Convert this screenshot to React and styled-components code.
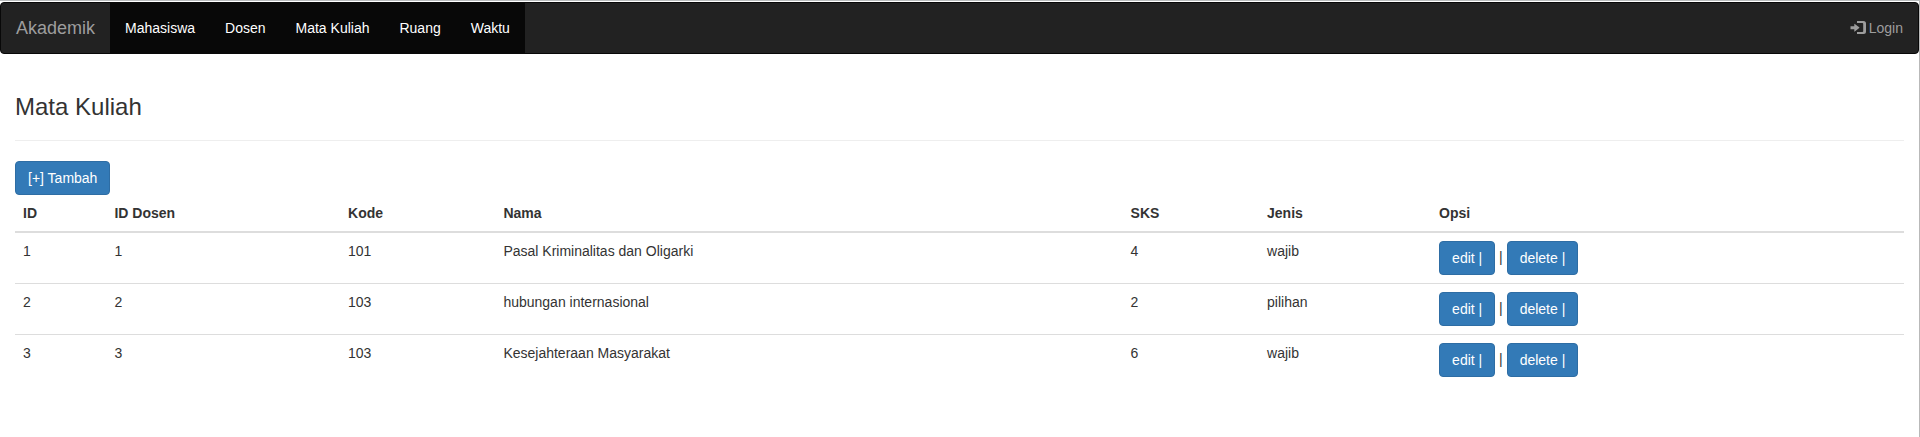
import React from "react";
import styled, { createGlobalStyle } from "styled-components";

const GlobalStyle = createGlobalStyle`
  *, *::before, *::after { box-sizing: border-box; }
  html { background: #fff; }
  body {
    margin: 0;
    font-family: "Helvetica Neue", Helvetica, Arial, "Liberation Sans", sans-serif;
    font-size: 14px;
    line-height: 20px;
    color: #333;
  }
`;

const Page = styled.div`
  min-height: 100vh;
  border-top: 1px solid #b9bcbd;
  border-right: 1px solid #b9b9b9;
  padding-top: 1px;
`;

const Navbar = styled.nav`
  display: flex;
  align-items: stretch;
  min-height: 52px;
  margin-bottom: 20px;
  background: #222;
  border: 1px solid #080808;
  border-radius: 4px;
`;

const Brand = styled.a`
  padding: 15px;
  font-size: 18px;
  color: #9d9d9d;
  text-decoration: none;
`;

const NavList = styled.ul`
  display: flex;
  margin: 0;
  margin-left: ${(p) => (p.$end ? "auto" : "0")};
  padding: 0;
  list-style: none;
`;

const NavLink = styled.a`
  display: block;
  padding: 15px;
  color: ${(p) => (p.$active ? "#fff" : "#9d9d9d")};
  background: ${(p) => (p.$active ? "#080808" : "transparent")};
  text-decoration: none;
`;

const LoginLink = styled(NavLink)`
  display: flex;
  align-items: center;
  gap: 3px;
`;

const Container = styled.main`
  display: flow-root;
  padding: 0 15px;
`;

const Title = styled.h3`
  margin: 20px 0;
  font-size: 24px;
  font-weight: 500;
  line-height: 26px;
`;

const Divider = styled.hr`
  margin: 20px 0;
  border: 0;
  border-top: 1px solid #eee;
`;

const Button = styled.button`
  display: inline-block;
  padding: 6px 12px;
  font: inherit;
  color: #fff;
  vertical-align: middle;
  white-space: nowrap;
  background: #337ab7;
  border: 1px solid #2e6da4;
  border-radius: 4px;
  cursor: pointer;
`;

const Toolbar = styled.div`
  display: flex;
`;

const Table = styled.table`
  width: 100%;
  margin-bottom: 20px;
  border-collapse: collapse;
  border-spacing: 0;
`;

const HeadCell = styled.th`
  padding: 8px;
  text-align: left;
  vertical-align: bottom;
  border-bottom: 2px solid #ddd;
`;

const Cell = styled.td`
  padding: 8px;
  vertical-align: top;
  border-top: 1px solid #ddd;
`;

function LoginIcon() {
  return (
    <svg width="16" height="14" viewBox="0 0 16 14" fill="#9d9d9d" aria-hidden="true">
      <path d="M0.500 5.300h3.800V3.200q0-.6.500-.2l4.400 3.300q.4.400 0 .8L4.800 10.500q-.5.400-.5-.2V8.200H.500z" />
      <path d="M7 0h6.500A2.500 2.500 0 0 1 16 2.500v8a2.500 2.500 0 0 1-2.500 2.500H7v-2h5.400a.8.8 0 0 0 .8-.8V2.800a.8.8 0 0 0-.8-.8H7z" />
    </svg>
  );
}

const menu = ["Mahasiswa", "Dosen", "Mata Kuliah", "Ruang", "Waktu"];
const columns = ["ID", "ID Dosen", "Kode", "Nama", "SKS", "Jenis", "Opsi"];
const courses = [
  [1, 1, 101, "Pasal Kriminalitas dan Oligarki", 4, "wajib"],
  [2, 2, 103, "hubungan internasional", 2, "pilihan"],
  [3, 3, 103, "Kesejahteraan Masyarakat", 6, "wajib"],
];

export default function App() {
  return (
    <Page>
      <GlobalStyle />
      <Navbar>
        <Brand href="#">Akademik</Brand>
        <NavList>
          {menu.map((name) => (
            <li key={name}>
              <NavLink href="#" $active>{name}</NavLink>
            </li>
          ))}
        </NavList>
        <NavList $end>
          <li>
            <LoginLink href="#"><LoginIcon />Login</LoginLink>
          </li>
        </NavList>
      </Navbar>
      <Container>
        <Title>Mata Kuliah</Title>
        <Divider />
        <Toolbar>
          <Button type="button">[+] Tambah</Button>
        </Toolbar>
        <Table>
          <thead>
            <tr>
              {columns.map((name) => (
                <HeadCell key={name} scope="col">{name}</HeadCell>
              ))}
            </tr>
          </thead>
          <tbody>
            {courses.map((course) => (
              <tr key={course[0]}>
                {course.map((value, i) => (
                  <Cell key={columns[i]}>{value}</Cell>
                ))}
                <Cell>
                  <Button type="button">edit |</Button> |{" "}
                  <Button type="button">delete |</Button>
                </Cell>
              </tr>
            ))}
          </tbody>
        </Table>
      </Container>
    </Page>
  );
}
